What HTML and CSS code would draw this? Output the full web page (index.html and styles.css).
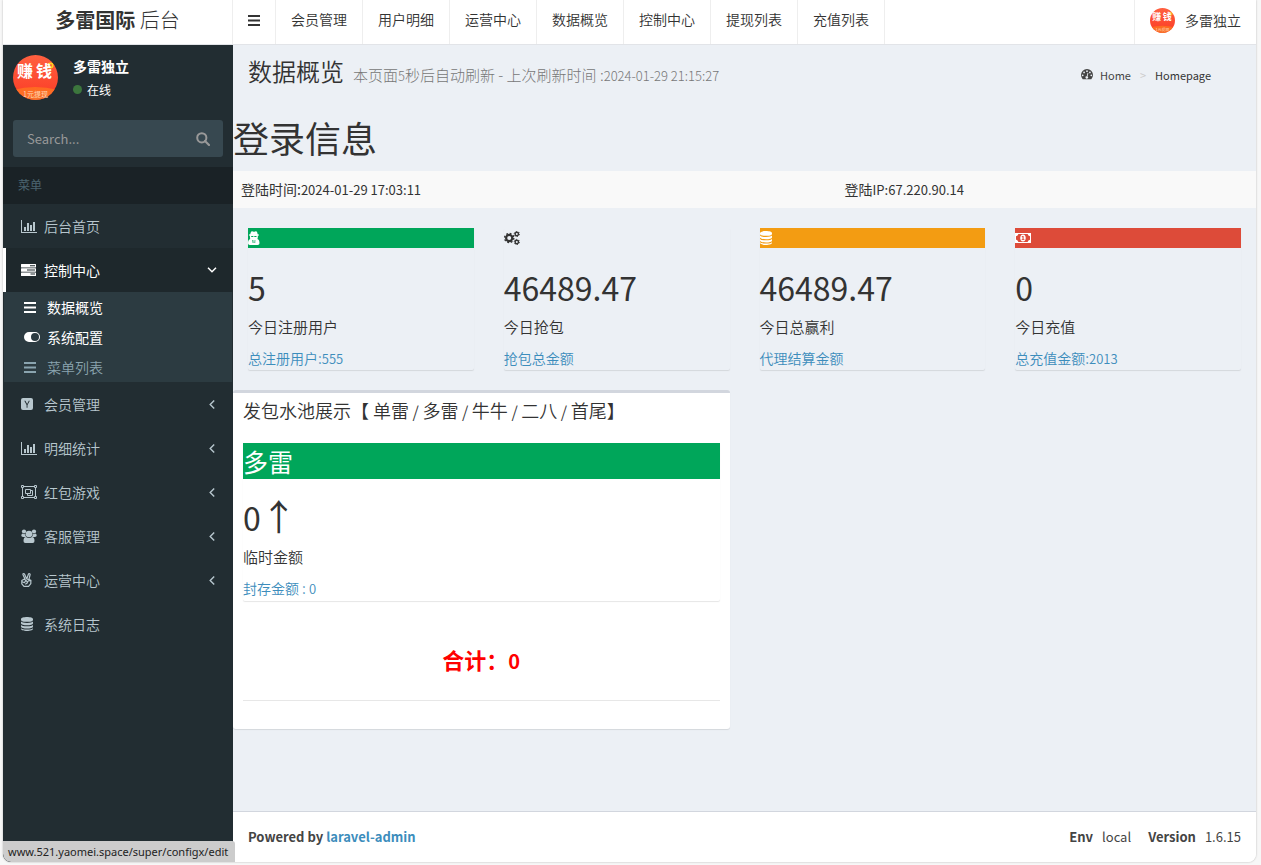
FILE: index.html
```html
<!DOCTYPE html>
<html lang="zh-CN">
<head>
<meta charset="utf-8">
<title>多雷国际 后台</title>
<link rel="stylesheet" href="styles.css">
</head>
<body>
<svg class="defs" aria-hidden="true">
  <defs>
    <linearGradient id="red" x1="0" y1="0" x2="0" y2="1"><stop offset="0" stop-color="#ff6040"/><stop offset="1" stop-color="#fb3b25"/></linearGradient>
    <linearGradient id="orange" x1="0" y1="0" x2="0" y2="1"><stop offset="0" stop-color="#ff6a20"/><stop offset="1" stop-color="#f8722c"/></linearGradient>
    <clipPath id="round"><circle cx="22.500" cy="22.500" r="22.500"/></clipPath>
  </defs>
  <symbol id="coin" viewBox="0 0 45 45">
    <g clip-path="url(#round)">
      <rect width="45" height="45" fill="url(#red)"/>
      <path d="M0 35Q22 29 45 35V45H0z" fill="url(#orange)"/>
    </g>
    <circle cx="37.500" cy="10.500" r="2.200" fill="none" stroke="#ffd51e" stroke-width="1.600"/>
  </symbol>
  <symbol id="bars" viewBox="0 0 12 11"><path d="M0 0h12v2H0zM0 4.500h12v2H0zM0 9h12v2H0z"/></symbol>
  <symbol id="search" viewBox="0 0 14 14"><circle cx="5.800" cy="5.800" r="4.600" fill="none" stroke="currentColor" stroke-width="2"/><path d="M9 9l4 4" stroke="currentColor" stroke-width="2.200" stroke-linecap="round"/></symbol>
  <symbol id="chart" viewBox="0 0 16 13"><path d="M0 0h1v12h15v1H0zM3 7h2v4H3zM6 3h2v8H6zM9 5h2v6H9zM12 2h2v9h-2z"/></symbol>
  <symbol id="server" viewBox="0 0 15 12"><path fill-rule="evenodd" d="M.5 0h14q.5 0 .5.500v2.500q0 .5-.5.500H.5Q0 3.500 0 3V.5Q0 0 .5 0zM9 1.200v1h5v-1zM.5 4.200h14q.5 0 .5.500v2.500q0 .5-.5.500H.5Q0 7.700 0 7.200V4.700q0-.5.500-.5zM6 5.400v1h8v-1zM.5 8.400h14q.5 0 .5.500v2.500q0 .5-.5.500H.5Q0 11.900 0 11.400V8.900q0-.5.500-.5zM9.500 9.600v1H14v-1z"/></symbol>
  <symbol id="toggle" viewBox="0 0 16 10"><path fill-rule="evenodd" d="M5 0h6a5 5 0 010 10H5A5 5 0 015 0zM11 1a4 4 0 000 8 4 4 0 000-8z"/></symbol>
  <symbol id="ysquare" viewBox="0 0 12 12"><path fill-rule="evenodd" d="M2 0h8q2 0 2 2v8q0 2-2 2H2q-2 0-2-2V2Q0 0 2 0zM3.300 2.700L5.600 7v2.700h.9V7l2.300-4.300h-1L6.100 6 4.400 2.700z"/></symbol>
  <symbol id="group" viewBox="0 0 16 14"><g fill="none" stroke="currentColor"><path d="M2.500 1.500h11M2.500 12.500h11M1.500 2.500v9M14.500 2.500v9M4.500 4.500h5v4h-5zM9.500 5.500h2v5h-5v-2"/><path d="M.5.500h2v2h-2zM13.500.500h2v2h-2zM.5 11.500h2v2h-2zM13.500 11.500h2v2h-2z"/></g></symbol>
  <symbol id="users" viewBox="0 0 16 14"><circle cx="3" cy="2.500" r="2.100"/><circle cx="13" cy="2.500" r="2.100"/><circle cx="8" cy="5" r="3.300"/><path d="M1.600 4.600q1.500 1 2.800.100Q4 7 5.200 8H2Q.3 8 .3 6.600.3 5 1.600 4.600zM14.400 4.600q-1.500 1-2.800.1.400 2.300-.8 3.300H14q1.700 0 1.700-1.400 0-1.600-1.300-2zM5 8q3 2 6 0 2.500.2 2.500 4 0 2-1.800 2H4.300q-1.800 0-1.800-2Q2.500 8.200 5 8z"/></symbol>
  <symbol id="peace" viewBox="0 0 11 14"><g fill="none" stroke="currentColor" stroke-linejoin="round" stroke-linecap="round" stroke-width="1.200"><path d="M4 6L2 1.700Q1.700.6 2.600.6 3.400.6 3.600 1.300L5.500 5.500M6 5.200L7.400 1.200Q8.100.2 8.900.9 9.300 1.300 9 2L7.900 6.600 9.900 7.400 9.800 10.700 7.600 13.300H3L.8 10.800V7.600L3 6.200 5 7.200 6.600 9.700 4.700 11M1.200 8.700l2.200 1L5 7.300M5.600 5.700l3.600 1.700-2.300.9"/></g></symbol>
  <symbol id="database" viewBox="0 0 12 14"><path d="M0 2.200C0-.6 12-.6 12 2.200v.7C12 5.500 0 5.500 0 2.900zM0 4.600q1 1.400 6 1.400t6-1.400v1.600C12 9 0 9 0 6.200zM0 7.900q1 1.400 6 1.400t6-1.400v1.600c0 2.700-12 2.700-12 0zM0 11.200q1 1.300 6 1.300t6-1.300v.6c0 2.900-12 2.900-12 0z"/></symbol>
  <symbol id="down" viewBox="0 0 10 6"><path d="M1 .8l4 4 4-4" fill="none" stroke="currentColor" stroke-width="1.500"/></symbol>
  <symbol id="left" viewBox="0 0 6 9"><path d="M5.200.6l-4 3.900 4 3.900" fill="none" stroke="currentColor" stroke-width="1.400"/></symbol>
  <symbol id="secret" viewBox="0 0 12 14"><path fill-rule="evenodd" d="M3 .7Q4 0 5 .6q1 .4 2 0Q8 0 9 .7l.7 2.500q1.400.3 1.400.8t-1.300.8q.2 2.200-.4 3.200 1 .3 1.400 1 .7 1.200.7 3.200 0 1.800-1.800 1.800H1.800Q0 14 0 12.200 0 10.200.8 9q.6-.8 1.500-1.100-.5-1-.3-3.100Q.8 4.500.8 4t1.400-.8zM3.200 5v.9h2.200V5zM6.300 5v.9h2.200V5zM4.300 9l.4 3h.8L5.300 9zM7.300 9l-.6 0-.3 3h.8z"/></symbol>
  <symbol id="gears" viewBox="0 0 16 14"><g fill="none" stroke="currentColor"><circle cx="5.200" cy="7" r="3.100" stroke-width="2.200"/><circle cx="5.200" cy="7" r="4.600" stroke-width="1.400" stroke-dasharray="1.800 1.813"/><circle cx="12.800" cy="3" r="1.700" stroke-width="1.400"/><circle cx="12.800" cy="3" r="2.600" stroke-width="1" stroke-dasharray="1.300 1.423"/><circle cx="12.800" cy="11" r="1.700" stroke-width="1.400"/><circle cx="12.800" cy="11" r="2.600" stroke-width="1" stroke-dasharray="1.300 1.423"/></g></symbol>
  <symbol id="money" viewBox="0 0 16 10"><path fill-rule="evenodd" d="M0 0h16v10H0zM3.400 1Q3 3 1 3.200v3.600q2 .2 2.400 2.200h9.200q.4-2 2.400-2.200V3.200Q13 3 12.600 1z"/><path fill-rule="evenodd" d="M8 1.500c3.700 0 3.700 7 0 7s-3.700-7 0-7zM6.600 3.600l.4.700.5-.2v2.100h-.8V7h2.700v-.8h-.8V2.900h-.9z"/></symbol>
  <symbol id="dash" viewBox="0 0 14 12"><path fill-rule="evenodd" d="M2 11.500A7 7 0 1112 11.500zM2 6a1 1 0 100 2 1 1 0 000-2zM3.600 2.600a1 1 0 100 2 1 1 0 000-2zM7 1.100a1 1 0 100 2 1 1 0 000-2zM10.400 2.600a1 1 0 100 2 1 1 0 000-2zM12 6a1 1 0 100 2 1 1 0 000-2zM7.700 4l-1 3.900a1.500 1.500 0 10.900.300l1-3.900z"/></symbol>
</svg>

<div class="window">
  <header class="topbar">
    <a class="brand" href="#"><b>多雷国际</b> 后台</a>
    <button class="toggle" type="button" aria-label="切换菜单"><svg width="12" height="11"><use href="#bars"/></svg></button>
    <nav class="topnav">
      <a href="#">会员管理</a><a href="#">用户明细</a><a href="#">运营中心</a><a href="#">数据概览</a><a href="#">控制中心</a><a href="#">提现列表</a><a href="#">充值列表</a>
    </nav>
    <a class="account" href="#"><svg class="avatar" width="25" height="25" viewBox="0 0 45 45"><use href="#coin"/><text x="4" y="22" font-size="16">赚</text><text x="23" y="22" font-size="16">钱</text><text class="tag" x="22.500" y="42" font-size="7">1元提现</text></svg>多雷独立</a>
  </header>

  <div class="body">
    <aside class="sidebar">
      <div class="profile">
        <svg class="avatar" width="45" height="45" viewBox="0 0 45 45"><use href="#coin"/><text x="4" y="22" font-size="16">赚</text><text x="23" y="22" font-size="16">钱</text><text class="tag" x="22.500" y="42" font-size="7">1元提现</text></svg>
        <div>
          <p class="name">多雷独立</p>
          <a class="status" href="#"><i class="dot"></i>在线</a>
        </div>
      </div>
      <form class="search">
        <input type="text" placeholder="Search..." aria-label="Search">
        <button type="submit" aria-label="搜索"><svg width="14" height="14"><use href="#search"/></svg></button>
      </form>
      <p class="menu-title">菜单</p>
      <nav class="menu">
        <a href="#"><span class="ico"><svg width="16" height="13"><use href="#chart"/></svg></span>后台首页</a>
        <a class="active" href="#"><span class="ico"><svg width="15" height="12"><use href="#server"/></svg></span>控制中心<svg class="arrow" width="10" height="6"><use href="#down"/></svg></a>
        <div class="submenu">
          <a class="on" href="#"><span class="ico"><svg width="12" height="11"><use href="#bars"/></svg></span>数据概览</a>
          <a class="on" href="#"><span class="ico"><svg width="16" height="10"><use href="#toggle"/></svg></span>系统配置</a>
          <a href="#"><span class="ico"><svg width="12" height="11"><use href="#bars"/></svg></span>菜单列表</a>
        </div>
        <a href="#"><span class="ico"><svg width="12" height="12"><use href="#ysquare"/></svg></span>会员管理<svg class="arrow" width="10" height="9"><use href="#left"/></svg></a>
        <a href="#"><span class="ico"><svg width="16" height="13"><use href="#chart"/></svg></span>明细统计<svg class="arrow" width="10" height="9"><use href="#left"/></svg></a>
        <a href="#"><span class="ico"><svg width="16" height="14"><use href="#group"/></svg></span>红包游戏<svg class="arrow" width="10" height="9"><use href="#left"/></svg></a>
        <a href="#"><span class="ico"><svg width="16" height="14"><use href="#users"/></svg></span>客服管理<svg class="arrow" width="10" height="9"><use href="#left"/></svg></a>
        <a href="#"><span class="ico"><svg width="11" height="14"><use href="#peace"/></svg></span>运营中心<svg class="arrow" width="10" height="9"><use href="#left"/></svg></a>
        <a href="#"><span class="ico"><svg width="12" height="14"><use href="#database"/></svg></span>系统日志</a>
      </nav>
    </aside>

    <div class="page">
      <main class="content">
        <div class="page-head">
          <h1>数据概览<small>本页面<span class="lat">5</span>秒后自动刷新 - 上次刷新时间 :<span class="lat">2024-01-29 21:15:27</span></small></h1>
          <nav class="crumbs"><a href="#"><svg width="12" height="11"><use href="#dash"/></svg>Home</a><i>&gt;</i><span>Homepage</span></nav>
        </div>
        <h2 class="login-title">登录信息</h2>
        <table class="login"><tbody><tr><td>登陆时间:<span class="lat">2024-01-29 17:03:11</span></td><td>登陆<span class="lat">IP:67.220.90.14</span></td></tr></tbody></table>

        <div class="cards">
          <section class="card"><div class="strip green"><svg width="12" height="14"><use href="#secret"/></svg></div><h3>5</h3><p>今日注册用户</p><a href="#">总注册用户:<span class="lat">555</span></a></section>
          <section class="card"><div class="strip plain"><svg width="16" height="14"><use href="#gears"/></svg></div><h3>46489.47</h3><p>今日抢包</p><a href="#">抢包总金额</a></section>
          <section class="card"><div class="strip amber"><svg width="12" height="14"><use href="#database"/></svg></div><h3>46489.47</h3><p>今日总赢利</p><a href="#">代理结算金额</a></section>
          <section class="card"><div class="strip red"><svg width="16" height="10"><use href="#money"/></svg></div><h3>0</h3><p>今日充值</p><a href="#">总充值金额:<span class="lat">2013</span></a></section>
        </div>

        <section class="box">
          <h2>发包水池展示【 单雷<span> / </span>多雷<span> / </span>牛牛<span> / </span>二八<span> / </span>首尾】</h2>
          <div class="card pool"><div class="strip green">多雷</div><h3>0<span class="up">↑</span></h3><p>临时金额</p><a href="#">封存金额 : <span class="lat">0</span></a></div>
          <p class="total">合计：<span>0</span></p>
        </section>
      </main>
      <footer class="footer">
        <strong>Powered by <a href="#">laravel-admin</a></strong>
        <div class="build"><span><b>Env</b>local</span><span><b>Version</b>1.6.15</span></div>
      </footer>
    </div>
  </div>
  <div class="link-status">www.521.yaomei.space/super/configx/edit</div>
</div>
</body>
</html>
```
FILE: styles.css
```css
* { box-sizing: border-box; }
body { margin: 0; background: #f7f7f7; color: #333; font: 14px/20px "Noto Sans CJK SC", sans-serif; }
h1, h2, h3, p { margin: 0; font-weight: 400; }
a { color: #3c8dbc; text-decoration: none; }
button { border: 0; background: none; color: inherit; padding: 0; font: inherit; }
svg { fill: currentColor; flex: none; display: block; }
i { font-style: normal; }
.defs { position: absolute; width: 0; height: 0; }
.lat { font-size: 13px; }
.avatar text { fill: #fff; font-weight: 700; }
.avatar .tag { fill: #ffd8b8; font-weight: 400; text-anchor: middle; }

.window { position: relative; display: flex; flex-direction: column; min-height: calc(100vh - 3px); margin: 0 5px 3px 3px; background: #fff; border-radius: 0 0 8px 8px; overflow: hidden; box-shadow: 0 0 2px #aaa; }

.topbar { display: flex; height: 45px; border-bottom: 1px solid #e2e4e8; background: #fff; }
.topbar a { color: #333; font-weight: 350; }
.topbar .brand { width: 230px; border-right: 1px solid #eee; text-align: center; font-size: 20px; line-height: 40px; font-weight: 300; }
.brand b { font-weight: 700; }
.toggle { width: 43px; padding-bottom: 4px; border-right: 1px solid #eee; }
.toggle svg { margin: 0 auto; }
.topnav { display: flex; flex: 1; }
.topnav a { padding: 0 15px; border-right: 1px solid #eee; line-height: 38px; }
.topbar .account { display: flex; align-items: center; gap: 10px; padding: 0 15px 4px; border-left: 1px solid #eee; }

.body { display: flex; flex: 1; }
.sidebar { width: 230px; flex: none; background: #222d32; color: #b8c7ce; }
.profile { display: flex; gap: 15px; padding: 10px 10px 8px; color: #fff; }
.name { font-weight: 700; line-height: 22px; }
.status { display: flex; align-items: center; gap: 5px; color: #fff; font-size: 12px; line-height: 25px; }
.dot { width: 9px; height: 9px; border-radius: 50%; background: #3c763d; }
.search { display: flex; height: 37px; margin: 10px; border-radius: 3px; background: #374850; color: #999; }
.search input { flex: 1; min-width: 0; border: 0; background: none; padding: 0 14px; color: #ccc; font: 13px "Noto Sans CJK SC", sans-serif; outline: 0; }
.search input::placeholder { color: #999; }
.search button { width: 40px; }
.search button svg { margin: 0 auto; }
.menu-title { padding: 8px 15px 9px; background: #1a2226; color: #4b646f; font-size: 12px; }
.menu a { display: flex; align-items: center; height: 44px; padding: 0 16px 0 15px; border-left: 3px solid transparent; color: #b8c7ce; font-weight: 350; }
.menu .active { border-color: #fff; background: #1e282c; color: #fff; font-weight: 400; }
.ico { width: 23px; }
.arrow { margin-left: auto; }
.submenu { margin: 0 1px; background: #2c3b41; }
.menu .submenu a { height: 30px; padding-left: 17px; color: #8aa4af; }
.menu .submenu .on { color: #fff; font-weight: 400; }

.page { display: flex; flex: 1; flex-direction: column; min-width: 0; }
.content { flex: 1; padding-bottom: 30px; background: #ecf0f5; }
.page-head { display: flex; justify-content: space-between; align-items: center; padding: 10px 45px 0 15px; }
.page-head h1 { font-size: 24px; line-height: 32px; font-weight: 350; }
.page-head small { margin-left: 9px; color: #777; font-size: 15px; font-weight: 300; }
.crumbs { display: flex; align-items: center; gap: 9px; padding-top: 2px; font-size: 11px; }
.crumbs a { display: flex; align-items: center; gap: 7px; color: #444; }
.crumbs i { color: #ccc; }
.login-title { padding-top: 20px; font-size: 36px; line-height: 50px; }
.login { width: 100%; margin-top: 9px; border-collapse: collapse; background: #f9f9f9; }
.login td { height: 37px; padding: 0 8px; }
.login td:first-child { width: 59%; }

.cards { display: grid; grid-template-columns: repeat(4, 1fr); gap: 30px; padding: 20px 15px; }
.card { height: 142px; border-radius: 2px; box-shadow: 0 1px 1px rgba(0, 0, 0, .1); }
.strip { display: flex; align-items: center; height: 20px; color: #fff; }
.green { background: #00a65a; }
.plain { color: #333; }
.amber { background: #f39c12; }
.red { background: #dd4b39; }
.card h3 { padding-top: 19px; font-size: 32px; line-height: 40px; }
.card p { padding: 10px 0 11px; font-size: 15px; font-weight: 350; }
.card a { display: block; font-weight: 350; }

.box { width: calc(50% - 15px); height: 339px; padding: 5px 10px; border-top: 3px solid #d2d6de; border-radius: 3px; background: #fff; box-shadow: 0 1px 1px rgba(0, 0, 0, .1); }
.box h2 { font-size: 18px; line-height: 24px; font-weight: 350; color: #333; }
.box h2 span { font-size: 16px; white-space: pre; }
.box .pool { height: 158px; margin-top: 20px; }
.pool .strip { height: 36px; font-size: 25px; line-height: 36px; }
.pool h3 { padding-top: 16px; }
.up { font-size: 36px; }
.total { height: 100px; padding-top: 44px; border-bottom: 1px solid #e7e7e7; color: #f00; font-size: 22px; line-height: 28px; font-weight: 700; text-align: center; }
.total span { font-size: 20px; }

.footer { display: flex; justify-content: space-between; padding: 15px; border-top: 1px solid #d2d6de; background: #fff; color: #444; font-size: 13px; }
.build { display: flex; gap: 17px; }
.build b { margin-right: 9px; }
.link-status { position: absolute; left: 0; bottom: 0; padding: 1px 7px 0 5px; border-radius: 0 3px 0 8px; background: #ccc; color: #222; font: 11px/20px "Noto Sans", sans-serif; }
```
